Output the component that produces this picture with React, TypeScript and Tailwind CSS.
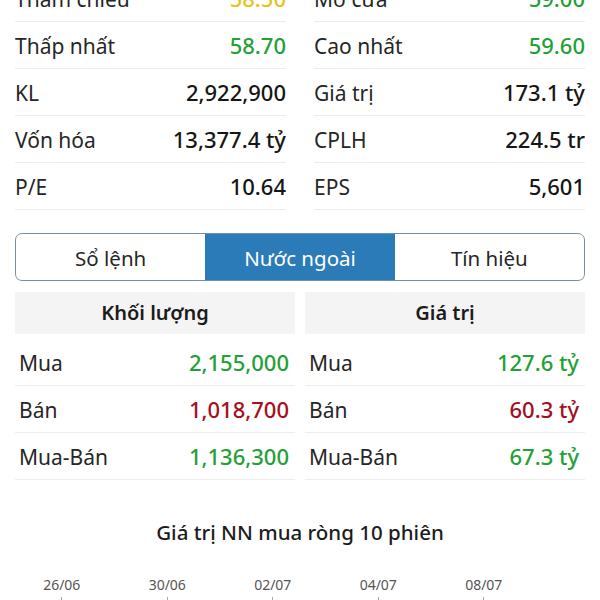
const GREEN = "text-[#23a136]";
const RED = "text-[#a50f1c]";

type Row = { label: string; value: string; color?: string };

const leftStats: Row[] = [
  { label: "Tham chiếu", value: "58.50", color: "text-[#e6c21c]" },
  { label: "Thấp nhất", value: "58.70", color: GREEN },
  { label: "KL", value: "2,922,900" },
  { label: "Vốn hóa", value: "13,377.4 tỷ" },
  { label: "P/E", value: "10.64" },
];

const rightStats: Row[] = [
  { label: "Mở cửa", value: "59.00", color: GREEN },
  { label: "Cao nhất", value: "59.60", color: GREEN },
  { label: "Giá trị", value: "173.1 tỷ" },
  { label: "CPLH", value: "224.5 tr" },
  { label: "EPS", value: "5,601" },
];

const volume: Row[] = [
  { label: "Mua", value: "2,155,000", color: GREEN },
  { label: "Bán", value: "1,018,700", color: RED },
  { label: "Mua-Bán", value: "1,136,300", color: GREEN },
];

const value: Row[] = [
  { label: "Mua", value: "127.6 tỷ", color: GREEN },
  { label: "Bán", value: "60.3 tỷ", color: RED },
  { label: "Mua-Bán", value: "67.3 tỷ", color: GREEN },
];

const dates = ["26/06", "30/06", "02/07", "04/07", "08/07"];

const Line = ({ r, fallback }: { r: Row; fallback: string }) => (
  <div className="w-full flex items-baseline justify-between leading-[30px]">
    <span className="text-[21px] text-[#262626]">{r.label}</span>
    <span className={`text-[22px] font-medium ${r.color ?? fallback}`}>{r.value}</span>
  </div>
);

const StatColumn = ({ rows }: { rows: Row[] }) => (
  <div className="flex flex-col">
    {rows.map((r) => (
      <div key={r.label} className="h-[47px] flex items-center pt-[1px] border-b border-[#ececec]">
        <Line r={r} fallback="text-[#161616]" />
      </div>
    ))}
  </div>
);

const ForeignColumn = ({ title, rows }: { title: string; rows: Row[] }) => (
  <div className="flex flex-col">
    <div className="h-[42px] bg-[#f4f4f4] flex items-center justify-center text-[20px] font-semibold text-[#1c1c1c]">
      {title}
    </div>
    <div className="flex flex-col mt-[5px]">
      {rows.map((r) => (
        <div key={r.label} className="h-[47px] flex items-center pl-[4px] pr-[6px] border-b border-[#ededed]">
          <Line r={r} fallback="" />
        </div>
      ))}
    </div>
  </div>
);

export default function App() {
  const tabs = ["Sổ lệnh", "Nước ngoài", "Tín hiệu"];
  return (
    <div className="w-[600px] h-[600px] overflow-hidden bg-white font-['Noto_Sans',sans-serif]">
      <div className="-mt-[25px] grid grid-cols-2 gap-[28px] px-[15px]">
        <StatColumn rows={leftStats} />
        <StatColumn rows={rightStats} />
      </div>

      <div className="mx-[15px] mt-[23px] h-[48px] grid grid-cols-3 rounded-[7px] border-[1.5px] border-[#7390a5] overflow-hidden">
        {tabs.map((t, i) => (
          <div
            key={t}
            className={`flex items-center justify-center pt-[2px] text-[20.5px] ${
              i === 1 ? "bg-[#2b7bb9] text-white" : "text-[#262626]"
            }`}
          >
            {t}
          </div>
        ))}
      </div>

      <div className="mt-[11px] grid grid-cols-2 gap-[10px] px-[15px]">
        <ForeignColumn title="Khối lượng" rows={volume} />
        <ForeignColumn title="Giá trị" rows={value} />
      </div>

      <div className="mt-[37px] text-center text-[20.5px] font-medium text-[#1c1c1c]">
        Giá trị NN mua ròng 10 phiên
      </div>

      <div className="mt-[26px] ml-[9px] flex">
        {dates.map((d) => (
          <div key={d} className="w-[105.5px] flex flex-col items-center">
            <span className="text-[14px] text-[#555]">{d}</span>
            <span className="mt-[2px] w-px h-[6px] bg-[#aaa]" />
          </div>
        ))}
      </div>
    </div>
  );
}
